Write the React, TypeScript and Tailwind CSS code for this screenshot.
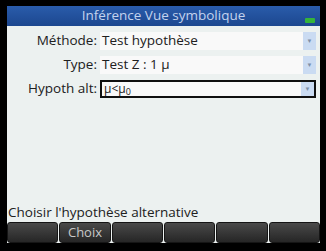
import React from "react";

function Field({ label, value, active }: { label: string; value: React.ReactNode; active?: boolean }) {
  return (
    <div className="flex items-center h-[18px] mt-[6px]">
      <span className="w-[93px] text-right pr-[3px] text-[13.5px] text-[#202020] leading-none">{label}</span>
      <div
        className={
          "flex-1 flex items-stretch h-[18px] bg-[#f9f9f9] " +
          (active ? "border-2 border-[#101010]" : "")
        }
      >
        <span className="flex-1 flex items-center pl-[2px] text-[13.5px] text-[#202020] leading-none">{value}</span>
        <span className="w-[13px] flex items-center justify-center bg-[#cadbf2] text-[#7d8fa8] text-[6px]">▼</span>
      </div>
    </div>
  );
}

export default function App() {
  const keys = ["", "Choix", "", "", "", ""];
  return (
    <div
      className="w-[326px] h-[251px] bg-black pt-[6px] pl-[7px] pr-[6px] pb-[8px]"
      style={{ fontFamily: '"Open Sans", "Noto Sans", sans-serif' }}
    >
      <div className="h-full flex flex-col bg-[#ecf1f0]">
        <div className="relative h-[20px] flex items-center justify-center bg-gradient-to-b from-[#2a5cab] to-[#1c478f] text-[#c3d3ee] text-[13.5px] leading-none">
          Inférence Vue symbolique
          <span className="absolute right-[5px] bottom-[3px] w-[10px] h-[5px] bg-[#35b43a] rounded-[1px]" />
        </div>
        <div className="pr-[4px]">
          <Field label="Méthode:" value="Test hypothèse" />
          <Field label="Type:" value={<span>Test Z : 1 μ</span>} />
          <Field
            label="Hypoth alt:"
            active
            value={
              <span className="text-[12px]">
                μ&lt;μ<sub className="text-[9px]">0</sub>
              </span>
            }
          />
        </div>
        <div className="flex-1" />
        <div className="px-[1px] text-[13.5px] text-[#202020] leading-none pb-[3px]">Choisir l'hypothèse alternative</div>
        <div className="flex gap-[1px] h-[21px]">
          {keys.map((k, i) => (
            <div
              key={i}
              className="flex-1 flex items-center justify-center rounded-[3px] bg-gradient-to-b from-[#4a4a4a] to-[#262626] text-[#c8c8c8] text-[13px] leading-none border border-[#151515]"
            >
              {k}
            </div>
          ))}
        </div>
      </div>
    </div>
  );
}
